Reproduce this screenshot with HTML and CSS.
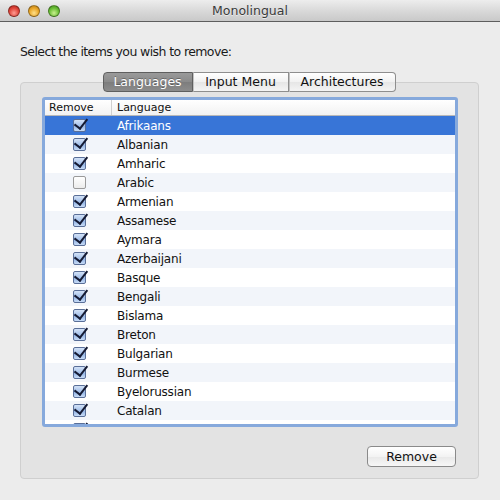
FILE: index.html
```html
<!DOCTYPE html>
<html>
<head>
<meta charset="utf-8">
<link rel="stylesheet" href="styles.css">
</head>
<body>
<div class="window">
  <div class="titlebar">
    <div class="lights">
      <span class="light red"></span>
      <span class="light yellow"></span>
      <span class="light green"></span>
    </div>
    <div class="title">Monolingual</div>
    <div></div>
  </div>
  <div class="content">
    <p class="prompt">Select the items you wish to remove:</p>
    <div class="tabs">
      <span class="tab t1 selected">Languages</span>
      <span class="tab t2">Input Menu</span>
      <span class="tab t3">Architectures</span>
    </div>
    <div class="group">
      <div class="table">
        <div class="thead">
          <span class="col-remove">Remove</span>
          <span class="col-lang">Language</span>
        </div>
        <div class="tbody">
          <div class="row sel"><span class="cell-check"><span class="cb on"></span></span><span class="cell-lang">Afrikaans</span></div>
          <div class="row alt"><span class="cell-check"><span class="cb on"></span></span><span class="cell-lang">Albanian</span></div>
          <div class="row"><span class="cell-check"><span class="cb on"></span></span><span class="cell-lang">Amharic</span></div>
          <div class="row alt"><span class="cell-check"><span class="cb"></span></span><span class="cell-lang">Arabic</span></div>
          <div class="row"><span class="cell-check"><span class="cb on"></span></span><span class="cell-lang">Armenian</span></div>
          <div class="row alt"><span class="cell-check"><span class="cb on"></span></span><span class="cell-lang">Assamese</span></div>
          <div class="row"><span class="cell-check"><span class="cb on"></span></span><span class="cell-lang">Aymara</span></div>
          <div class="row alt"><span class="cell-check"><span class="cb on"></span></span><span class="cell-lang">Azerbaijani</span></div>
          <div class="row"><span class="cell-check"><span class="cb on"></span></span><span class="cell-lang">Basque</span></div>
          <div class="row alt"><span class="cell-check"><span class="cb on"></span></span><span class="cell-lang">Bengali</span></div>
          <div class="row"><span class="cell-check"><span class="cb on"></span></span><span class="cell-lang">Bislama</span></div>
          <div class="row alt"><span class="cell-check"><span class="cb on"></span></span><span class="cell-lang">Breton</span></div>
          <div class="row"><span class="cell-check"><span class="cb on"></span></span><span class="cell-lang">Bulgarian</span></div>
          <div class="row alt"><span class="cell-check"><span class="cb on"></span></span><span class="cell-lang">Burmese</span></div>
          <div class="row"><span class="cell-check"><span class="cb on"></span></span><span class="cell-lang">Byelorussian</span></div>
          <div class="row alt"><span class="cell-check"><span class="cb on"></span></span><span class="cell-lang">Catalan</span></div>
          <div class="row"><span class="cell-check"><span class="cb on"></span></span><span class="cell-lang"></span></div>
        </div>
      </div>
      <div class="actions">
        <button class="btn">Remove</button>
      </div>
    </div>
  </div>
</div>
</body>
</html>
```

FILE: styles.css
```css
* { box-sizing: border-box; }
html, body { margin: 0; padding: 0; }
body {
  width: 500px;
  height: 500px;
  background: #ececec;
  font-family: "DejaVu Sans", "Liberation Sans", sans-serif;
  color: #111;
  overflow: hidden;
}
.window { width: 500px; height: 500px; }

.titlebar {
  height: 22px;
  display: grid;
  grid-template-columns: 1fr auto 1fr;
  align-items: center;
  background: linear-gradient(#ededed, #d6d6d6 60%, #c9c9c9);
  border-bottom: 1px solid #5e5e5e;
}
.lights { display: flex; gap: 8px; padding-left: 8px; }
.light {
  width: 12px; height: 12px; border-radius: 50%;
  border: 1px solid rgba(0,0,0,0.35);
}
.red { background: radial-gradient(circle at 50% 70%, #ff9e94, #e0463b 55%, #a82018); }
.yellow { background: radial-gradient(circle at 50% 70%, #ffe08a, #e9a628 55%, #b17613); }
.green { background: radial-gradient(circle at 50% 70%, #c9f08f, #6bbf36 55%, #3f8a1a); }
.title { font-size: 12.5px; color: #3a3a3a; text-shadow: 0 1px 0 rgba(255,255,255,0.6); }

.content { padding: 0 21px 0 20px; }
.prompt {
  margin: 0;
  padding: 22px 0 0 0;
  font-size: 12.5px;
  letter-spacing: -0.6px;
  line-height: 15px;
  color: #1a1a1a;
}
.tabs {
  display: flex;
  justify-content: center;
  margin-top: 13px;
  margin-bottom: -10px;
  position: relative;
  z-index: 1;
  padding-right: 1px;
}
.tab {
  height: 20px;
  line-height: 18px;
  font-size: 12.5px;
  text-align: center;
  background: linear-gradient(#ffffff, #f1f1f1 50%, #e6e6e6 51%, #f4f4f4);
  border: 1px solid #8e8e8e;
  border-left: 1px solid #c2c2c2;
  color: #111;
}
.t1 { width: 90px; }
.t2 { width: 96px; }
.t3 { width: 107px; }
.tab:first-child { border-left: 1px solid #7a7a7a; border-radius: 4px 0 0 4px; }
.tab:last-child { border-radius: 0 4px 4px 0; }
.tab.selected {
  background: linear-gradient(#9a9a9a, #8a8a8a 50%, #7d7d7d 51%, #8c8c8c);
  color: #fff;
  border-color: #5f5f5f;
  text-shadow: 0 -1px 0 rgba(0,0,0,0.3);
}

.group {
  width: 459px;
  height: 397px;
  background: #e3e3e3;
  border: 1px solid #cfcfcf;
  border-radius: 4px;
  padding: 14px 20px 0 21px;
}
.table {
  height: 330px;
  border: 3px solid #86a9dc;
  border-radius: 3px;
  background: #fff;
  overflow: hidden;
}
.thead {
  display: flex;
  height: 16px;
  font-size: 11px;
  line-height: 15px;
  background: linear-gradient(#ffffff, #f2f2f2);
  border-bottom: 1px solid #b8b8b8;
  color: #111;
}
.col-remove { width: 67px; padding-left: 4px; border-right: 1px solid #d0d0d0; }
.col-lang { padding-left: 5px; }
.row {
  display: flex;
  align-items: center;
  height: 19px;
  font-size: 12px;
  letter-spacing: -0.2px;
  background: #fff;
}
.row.alt { background: #f2f5fa; }
.row.sel { background: #3875d7; color: #fff; }
.cell-check { width: 68px; display: flex; justify-content: center; padding-left: 1px; }
.cell-lang { padding-left: 4px; }
.cb {
  position: relative;
  width: 13px; height: 13px;
  border-radius: 2px;
  border: 1px solid #9a9a9a;
  background: linear-gradient(#ffffff, #ececec);
}
.cb.on {
  border-color: #5a6f98;
  background: linear-gradient(#d3e2f7, #a5c1ea 50%, #8eb1e4 51%, #c7dbf6);
}
.cb.on::after {
  content: "";
  position: absolute;
  left: 3px; top: -4px;
  width: 6px; height: 11px;
  border-right: 2.5px solid #141a33;
  border-bottom: 2.5px solid #141a33;
  transform: rotate(38deg);
}

.actions { display: flex; justify-content: flex-end; padding-top: 19px; padding-right: 2px; }
.btn {
  width: 89px; height: 21px;
  font-family: "DejaVu Sans", sans-serif;
  font-size: 12.5px;
  color: #111;
  border: 1px solid #8a8a8a;
  border-radius: 4px;
  background: linear-gradient(#ffffff, #f3f3f3 50%, #e8e8e8 51%, #f7f7f7);
  padding: 0;
}
```
